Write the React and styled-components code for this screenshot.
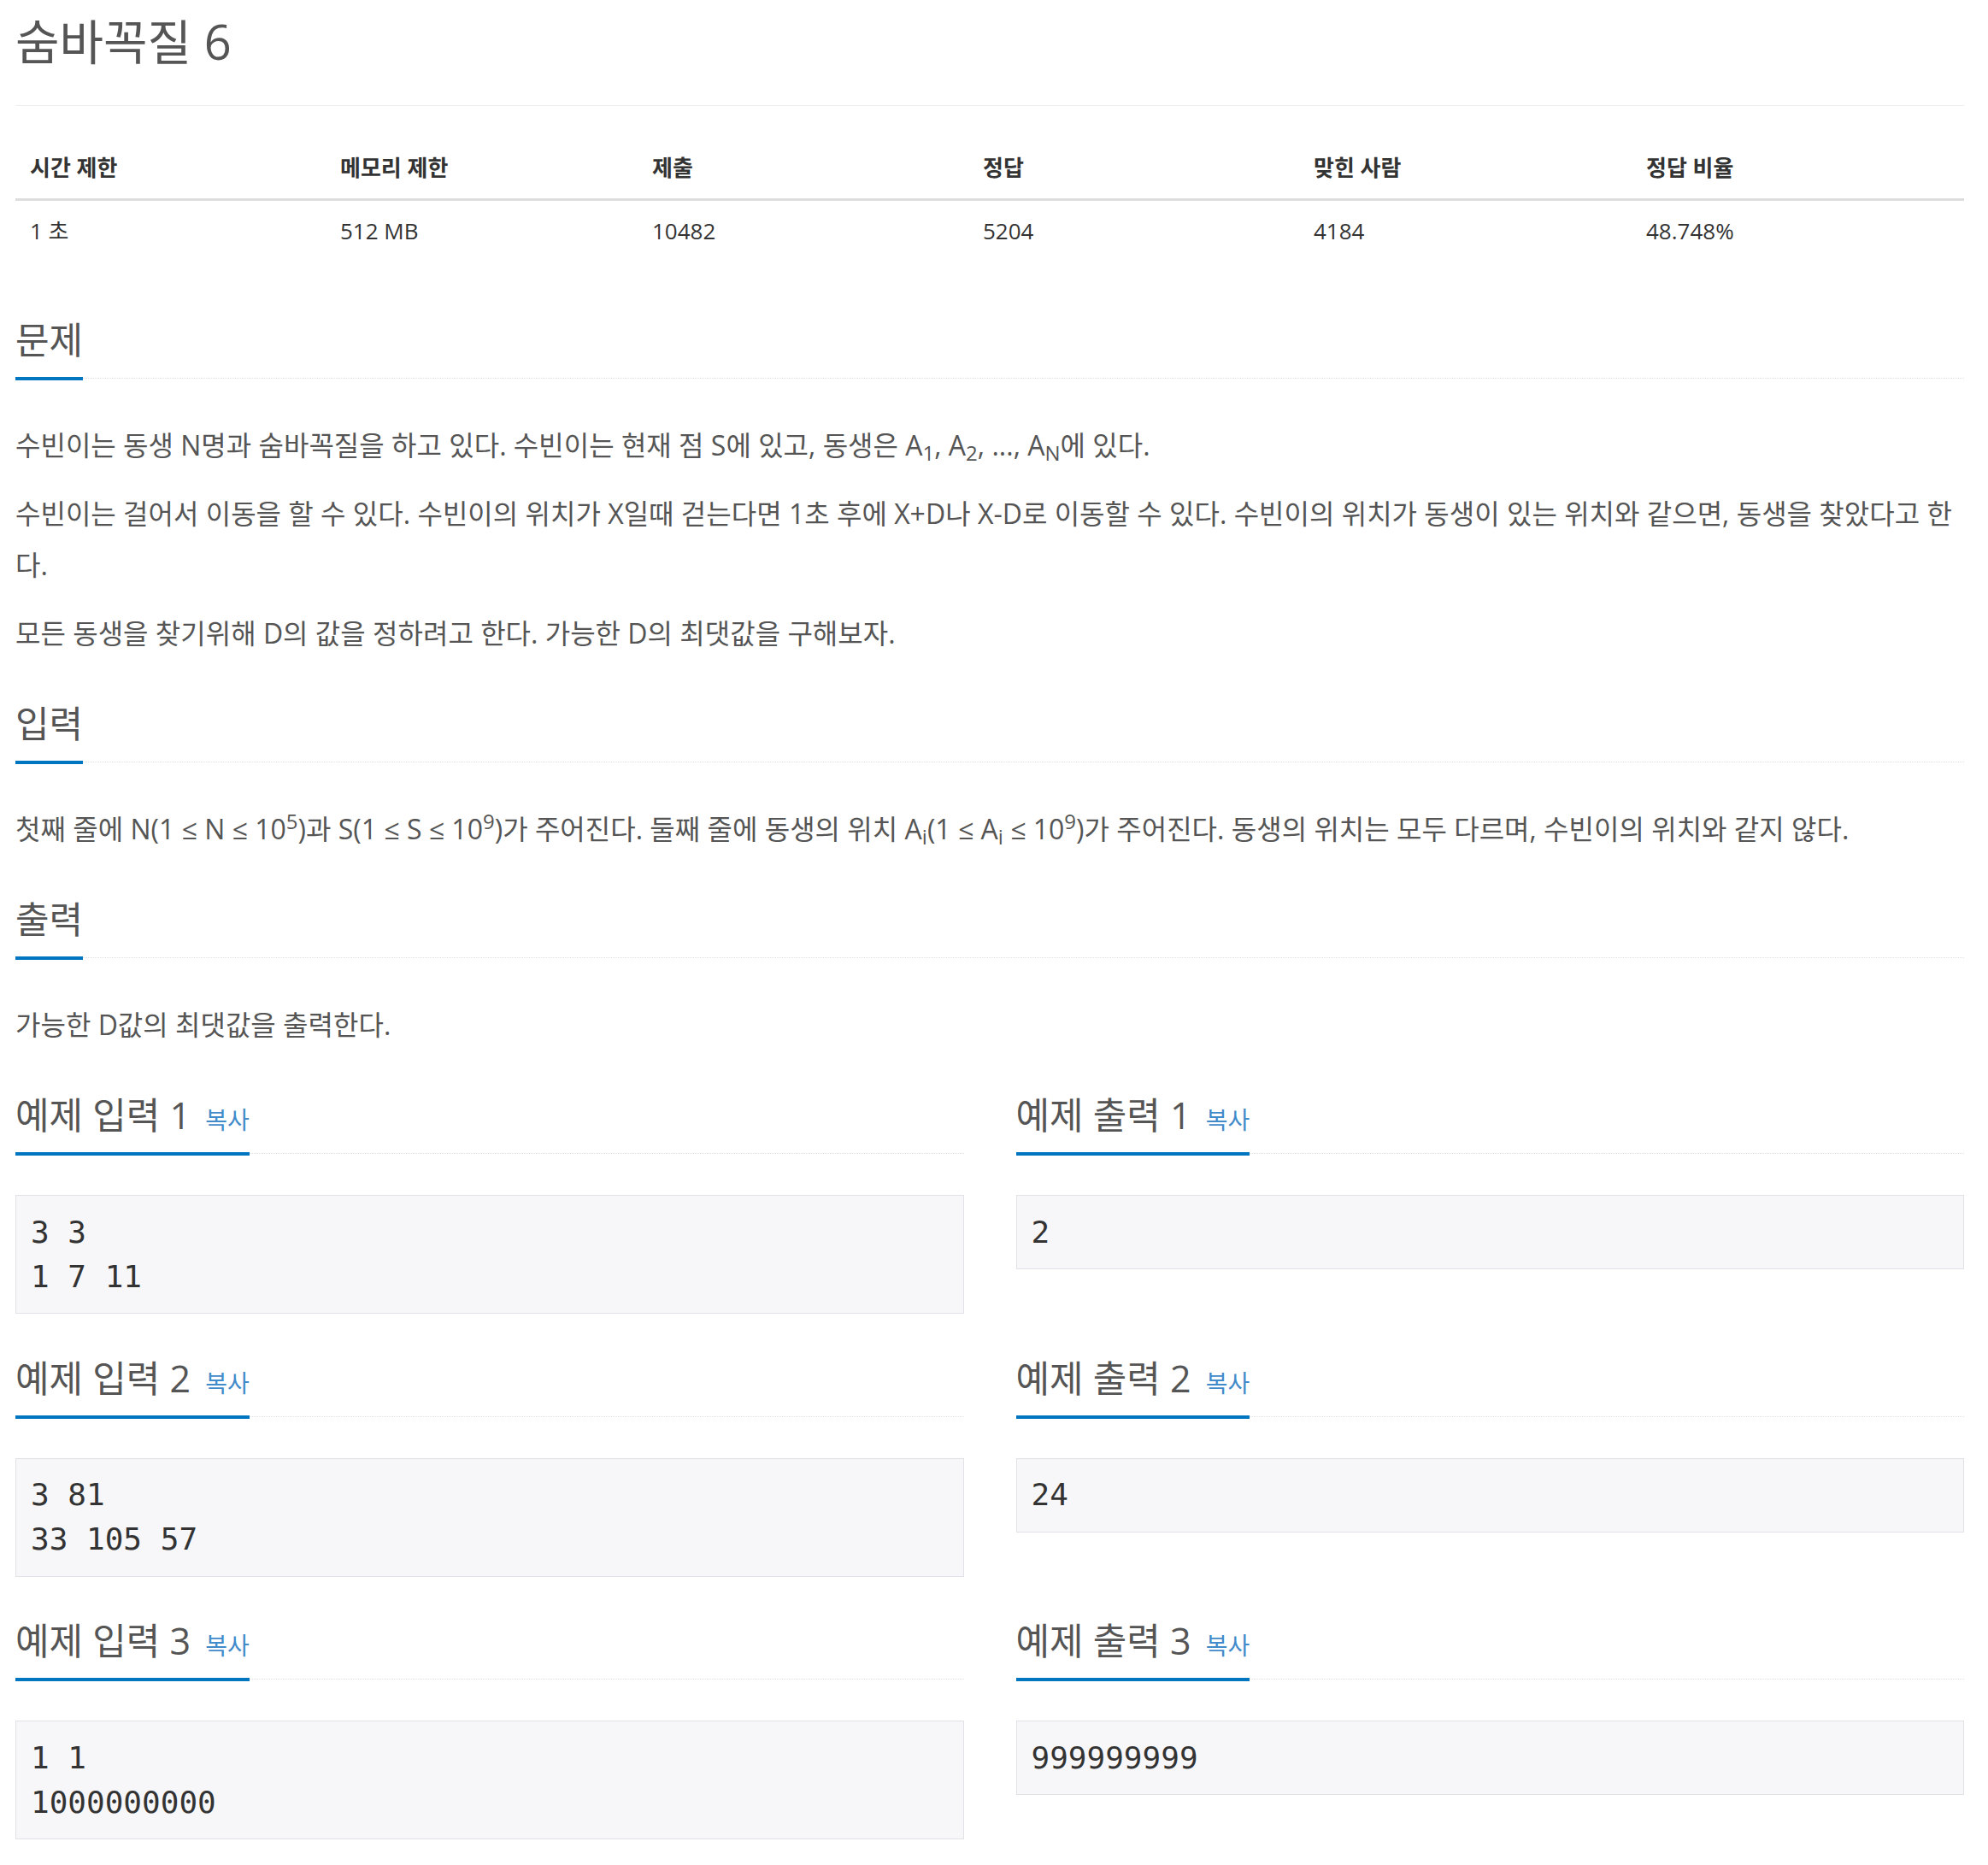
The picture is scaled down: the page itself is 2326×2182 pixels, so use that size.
import React from 'react'
import styled, { createGlobalStyle } from 'styled-components'

const GlobalStyle = createGlobalStyle`
  body {
    margin: 0;
    background: #fff;
    font-family: "Open Sans", "Noto Sans CJK KR", sans-serif;
    color: #333;
  }
  sup, sub {
    font-size: 75%;
    line-height: 0;
    position: relative;
    vertical-align: baseline;
  }
  sup { top: -0.5em; }
  sub { bottom: -0.25em; }
`

const Page = styled.div`
  padding: 17px 28px 30px 18px;
`

const Title = styled.h1`
  margin: 0;
  font-size: 56px;
  line-height: 62px;
  font-weight: 400;
  color: #555;
`

const Rule = styled.hr`
  margin: 44px 0 0;
  border: 0;
  border-top: 1.5px solid #eee;
`

const InfoTable = styled.table`
  width: 100%;
  table-layout: fixed;
  border-collapse: collapse;
  margin: 36px 0 71px;
  font-size: 26px;
  line-height: 36px;
  color: #333;
`

const Th = styled.th`
  text-align: left;
  font-weight: 700;
  padding: 18px 17px;
  border-bottom: 3px solid #ddd;
`

const Td = styled.td`
  padding: 17px 17px;
`

const Section = styled.section`
  display: flex;
  flex-direction: column;
  margin-bottom: 34px;
`

const Headline = styled.div`
  display: flex;
  align-items: flex-end;
  border-bottom: 1.5px dotted #dcdfe4;
  margin-bottom: 48px;
`

const H2 = styled.h2`
  margin: 0 0 -3px;
  padding-bottom: 21px;
  font-size: 43px;
  line-height: 44px;
  font-weight: 400;
  color: #555;
  border-bottom: 4.5px solid #0076c0;
`

const CopyLink = styled.span`
  font-size: 28px;
  line-height: 1;
  color: #428bca;
  margin-left: 6px;
`

const Para = styled.p`
  margin: 0 0 20px;
  font-size: 32px;
  line-height: 60px;
  color: #555;
`

const SampleGrid = styled.div`
  display: grid;
  grid-template-columns: 1fr 1fr;
  column-gap: 61px;
  align-items: start;
`

const Pre = styled.pre`
  margin: 0 0 19.5px;
  padding: 16.5px 17px;
  background: #f7f7f9;
  border: 1.5px solid #e1e1e8;
  font-family: "DejaVu Sans Mono", monospace;
  font-size: 36px;
  line-height: 52px;
  color: #333;
`

const info = {
  head: ['시간 제한', '메모리 제한', '제출', '정답', '맞힌 사람', '정답 비율'],
  row: ['1 초', '512 MB', '10482', '5204', '4184', '48.748%'],
  widths: [363, 365, 387, 387, 389, 389],
}

const samples = [
  { n: 1, input: '3 3\n1 7 11', output: '2' },
  { n: 2, input: '3 81\n33 105 57', output: '24' },
  { n: 3, input: '1 1\n1000000000', output: '999999999' },
]

const Heading = ({ children, copy }) => (
  <Headline>
    <H2>
      {children}
      {copy && <CopyLink>복사</CopyLink>}
    </H2>
  </Headline>
)

export default function App() {
  return (
    <Page>
      <GlobalStyle />
      <Title>숨바꼭질 6</Title>
      <Rule />
      <InfoTable>
        <colgroup>
          {info.widths.map((w, i) => <col key={i} style={{ width: w }} />)}
        </colgroup>
        <thead>
          <tr>{info.head.map(h => <Th key={h}>{h}</Th>)}</tr>
        </thead>
        <tbody>
          <tr>{info.row.map((v, i) => <Td key={i}>{v}</Td>)}</tr>
        </tbody>
      </InfoTable>

      <Section>
        <Heading>문제</Heading>
        <Para>수빈이는 동생 N명과 숨바꼭질을 하고 있다. 수빈이는 현재 점 S에 있고, 동생은 A<sub>1</sub>, A<sub>2</sub>, ..., A<sub>N</sub>에 있다.</Para>
        <Para>수빈이는 걸어서 이동을 할 수 있다. 수빈이의 위치가 X일때 걷는다면 1초 후에 X+D나 X-D로 이동할 수 있다. 수빈이의 위치가 동생이 있는 위치와 같으면, 동생을 찾았다고 한다.</Para>
        <Para>모든 동생을 찾기위해 D의 값을 정하려고 한다. 가능한 D의 최댓값을 구해보자.</Para>
      </Section>

      <Section>
        <Heading>입력</Heading>
        <Para>첫째 줄에 N(1 ≤ N ≤ 10<sup>5</sup>)과 S(1 ≤ S ≤ 10<sup>9</sup>)가 주어진다. 둘째 줄에 동생의 위치 A<sub>i</sub>(1 ≤ A<sub>i</sub> ≤ 10<sup>9</sup>)가 주어진다. 동생의 위치는 모두 다르며, 수빈이의 위치와 같지 않다.</Para>
      </Section>

      <Section>
        <Heading>출력</Heading>
        <Para>가능한 D값의 최댓값을 출력한다.</Para>
      </Section>

      {samples.map(s => (
        <SampleGrid key={s.n}>
          <Section>
            <Heading copy>예제 입력 {s.n} </Heading>
            <Pre>{s.input}</Pre>
          </Section>
          <Section>
            <Heading copy>예제 출력 {s.n} </Heading>
            <Pre>{s.output}</Pre>
          </Section>
        </SampleGrid>
      ))}
    </Page>
  )
}
